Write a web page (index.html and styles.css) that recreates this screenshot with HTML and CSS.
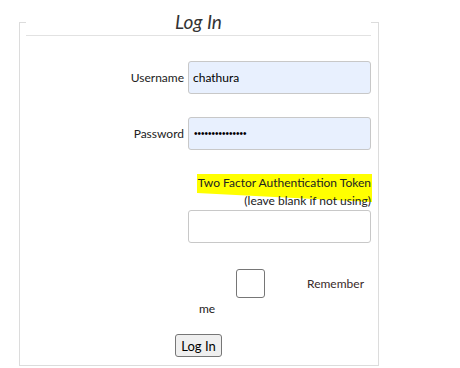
FILE: index.html
```html
<!DOCTYPE html>
<html lang="en">
<head>
    <meta charset="UTF-8">
    <title>Log In</title>
    <link rel="stylesheet" href="styles.css">
</head>
<body>
    <div class="page">
        <form class="login-form" onsubmit="return false">
            <fieldset class="login-box">
                <legend class="login-title">Log In</legend>

                <div class="form-row row-user">
                    <label for="username">Username</label>
                    <input id="username" class="text-input filled" type="text" value="chathura">
                </div>

                <div class="form-row row-pass">
                    <label for="password">Password</label>
                    <input id="password" class="text-input filled pass" type="password" value="passwordpasswor">
                </div>

                <div class="form-row row-token">
                    <span></span>
                    <div class="token-field">
                        <label for="token" class="token-label">
                            Two Factor Authentication Token<br>
                            (leave blank if not using)
                        </label>
                        <input id="token" class="text-input" type="text">
                    </div>
                </div>

                <div class="form-row row-remember">
                    <span></span>
                    <label class="remember">
                        <span class="remember-line">
                            <input type="checkbox" class="check">
                            <span>Remember</span>
                        </span>
                        <span class="remember-me">me</span>
                    </label>
                </div>

                <div class="actions">
                    <button type="submit" class="login-btn">Log In</button>
                </div>
            </fieldset>
        </form>
    </div>
</body>
</html>
```

FILE: styles.css
```css
body {
    margin: 0;
    background: #ffffff;
    font-family: Lato, "Noto Sans", sans-serif;
    font-size: 12px;
    color: #222;
}
.page {
    padding-left: 19px;
}
.login-form {
    margin: 0;
}
.login-box {
    box-sizing: border-box;
    width: 360px;
    margin: 9px 0 0 0;
    padding: 0 7px 8px 6px;
    border: 1px solid #dcdcdc;
    min-width: 0;
}
.login-title {
    width: 100%;
    box-sizing: border-box;
    padding: 0;
    text-align: center;
    font-style: italic;
    font-size: 19px;
    line-height: 26px;
    color: #333;
    border-bottom: 1px solid #e2e2e2;
}
.form-row {
    display: grid;
    grid-template-columns: 1fr 183px;
    column-gap: 4px;
    align-items: center;
}
.form-row label {
    text-align: right;
}
.row-user {
    margin-top: 25px;
}
.row-pass {
    margin-top: 23px;
}
.row-token {
    margin-top: 24px;
}
.row-remember {
    margin-top: 26px;
}
.text-input {
    box-sizing: border-box;
    width: 183px;
    height: 33px;
    margin: 0;
    padding: 0 4px;
    border: 1px solid #c8c8c8;
    border-radius: 3px;
    background: #ffffff;
    font-family: Lato, "Noto Sans", sans-serif;
    font-size: 12px;
    color: #000;
}
.text-input.filled {
    background: #e8f0fe;
}
.text-input.pass {
    font-family: "Liberation Sans", sans-serif;
    font-size: 10px;
    padding-left: 5px;
}
.token-field {
    display: flex;
    flex-direction: column;
}
.form-row .token-label {
    position: relative;
    z-index: 0;
    line-height: 18px;
    white-space: nowrap;
    color: #222;
}
.token-label::before {
    content: "";
    position: absolute;
    left: 9px;
    right: -1px;
    top: 0;
    height: 28px;
    background: #ffff00;
    clip-path: polygon(0 0, 100% 0, 100% 100%, 0 68%);
    z-index: -1;
}
.form-row .remember {
    display: flex;
    flex-direction: column;
    text-align: left;
}
.remember-line {
    display: flex;
    justify-content: space-between;
    align-items: center;
    padding: 0 7px 0 48px;
    color: #3a2a2a;
}
.check {
    appearance: none;
    box-sizing: border-box;
    width: 29px;
    height: 29px;
    margin: 0;
    border: 1px solid #767676;
    border-radius: 3px;
    background: #fff;
}
.remember-me {
    padding-left: 11px;
    line-height: 18px;
    margin-top: 2px;
}
.actions {
    margin-top: 16px;
    text-align: center;
}
.login-btn {
    box-sizing: border-box;
    height: 23px;
    padding: 0 5px;
    border: 1px solid #767676;
    border-radius: 3px;
    background: #efefef;
    font-family: Lato, "Noto Sans", sans-serif;
    font-size: 13px;
    color: #000;
}
```
